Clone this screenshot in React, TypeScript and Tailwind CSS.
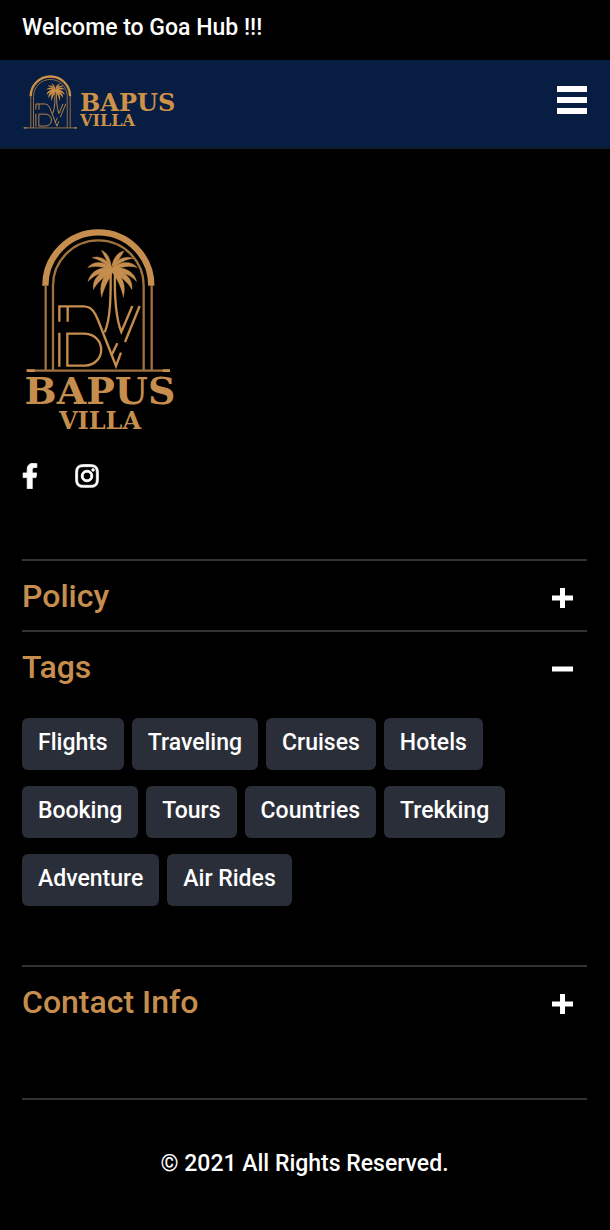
import React, { useState } from 'react';
import { FaFacebookF, FaInstagram } from 'react-icons/fa';

const tags = [
  'Flights',
  'Traveling',
  'Cruises',
  'Hotels',
  'Booking',
  'Tours',
  'Countries',
  'Trekking',
  'Adventure',
  'Air Rides',
];

const LogoMark: React.FC<{ className?: string }> = ({ className }) => (
  <svg viewBox="36 27 468 432" className={className} fill="none" stroke="currentColor" aria-hidden="true">
    {/* arch */}
    <path d="M106 197A159 160 0 0 1 424 197" strokeWidth="19" />
    <g strokeWidth="7" opacity="0.8">
      <path d="M107 197V452M425 197V452" />
      <path d="M129 452V197A136 136 0 0 1 401 197V452" />
      <path d="M50 452H480" />
    </g>
    <path d="M50 452H74M458 452H480" strokeWidth="8" />
    {/* monogram */}
    <g strokeWidth="7">
      <path d="M148 305V259H222C246 260 256 280 264 300L318 438L333 398" />
      <path d="M173 305V259M148 338V440" />
      <path d="M172 437V341H224C290 344 290 434 224 437Z" />
      <path d="M322 370L304 407M389 258L345 366" />
      <path d="M302 150C302 210 304 290 284 337M315 150C313 220 316 290 334 336L367 258" />
    </g>
    {/* palm crown */}
    <g fill="currentColor" strokeWidth="1" strokeLinejoin="round">
      <path d="M304 142C302 116 292 98 274 91C282 104 288 122 304 142Z" />
      <path d="M304 142C310 116 320 98 342 93C334 106 326 124 304 142Z" />
      <path d="M306 144C290 114 266 106 246 113C266 118 282 128 306 144Z" />
      <path d="M306 144C322 114 346 106 370 115C348 118 332 128 306 144Z" />
      <path d="M306 144C280 122 250 122 233 143C258 136 280 140 306 152Z" />
      <path d="M306 144C334 122 364 122 382 143C358 136 334 140 306 152Z" />
      <path d="M306 144C270 138 240 156 234 185C252 164 276 158 306 154Z" />
      <path d="M306 144C342 138 374 156 380 185C362 164 338 158 306 154Z" />
      <path d="M306 146C270 152 246 176 250 209C264 184 282 170 306 156Z" />
      <path d="M306 146C344 152 370 176 366 209C352 184 332 170 306 156Z" />
      <path d="M306 148C278 166 266 196 275 232C283 200 296 178 308 158Z" />
      <path d="M306 148C338 166 350 196 340 232C334 200 322 178 308 158Z" />
    </g>
  </svg>
);

interface SectionProps {
  title: string;
  defaultOpen?: boolean;
  children?: React.ReactNode;
}

const Section: React.FC<SectionProps> = ({ title, defaultOpen = false, children }) => {
  const [open, setOpen] = useState(defaultOpen);

  return (
    <section className="border-t-2 border-[#333333]">
      <h2>
        <button
          type="button"
          aria-expanded={open}
          onClick={() => setOpen(!open)}
          className="flex h-[69px] w-full items-center justify-between pr-3 text-left text-[32px] font-medium text-[#c68e4e]"
        >
          <span>{title}</span>
          <svg viewBox="0 0 24 24" className="size-6 text-white" fill="none" stroke="currentColor" strokeWidth="5" aria-hidden="true">
            <path d={open ? 'M1 14H22' : 'M1 14H22M11.5 4V24'} />
          </svg>
        </button>
      </h2>
      {open && children}
    </section>
  );
};

const App: React.FC = () => {
  return (
    <div className="min-h-screen bg-black font-[Roboto,sans-serif] text-[23px] leading-8 font-medium text-white">
      <p className="px-[22px] pt-3 pb-4">Welcome to Goa Hub !!!</p>

      <header className="flex h-[89px] items-start justify-between border-b-2 border-[#101b2e] bg-[#081d42] pt-[15px] pr-[23px] pl-[22px]">
        <a href="#home" aria-label="Bapus Villa" className="flex items-end text-[#cd9248]">
          <LogoMark className="h-[54px] w-[58px]" />
          <span className="flex flex-col font-['DejaVu_Serif',serif] font-bold">
            <span className="text-2xl leading-5">BAPUS</span>
            <span className="text-base leading-4">VILLA</span>
          </span>
        </a>
        <button type="button" aria-label="Open menu" className="mt-[11px]">
          <svg viewBox="0 0 30 28" className="h-7 w-[30px]" fill="currentColor" aria-hidden="true">
            <path d="M0 0H30V6H0ZM0 11H30V17H0ZM0 22H30V28H0Z" />
          </svg>
        </button>
      </header>

      <footer className="pt-20 pr-[23px] pl-[22px]">
        <a href="#home" aria-label="Bapus Villa" className="flex w-[156px] flex-col items-center text-[#c68e4e]">
          <LogoMark className="w-full" />
          <span className="font-['DejaVu_Serif',serif] text-[38px] leading-9 font-bold">BAPUS</span>
          <span className="font-['DejaVu_Serif',serif] text-2xl leading-6 font-bold">VILLA</span>
        </a>

        <div className="mt-[30px] mb-[70px] flex gap-9">
          <a href="#facebook" aria-label="Facebook">
            <FaFacebookF className="h-[26px] w-4" stroke="currentColor" strokeWidth="16" />
          </a>
          <a href="#instagram" aria-label="Instagram">
            <FaInstagram className="size-[26px]" stroke="currentColor" strokeWidth="16" />
          </a>
        </div>

        <Section title="Policy" />
        <Section title="Tags" defaultOpen>
          <ul className="flex flex-wrap gap-x-2 gap-y-4 pt-[17px] pb-[59px]">
            {tags.map((tag) => (
              <li key={tag}>
                <a href="#tags" className="block h-[52px] rounded-md bg-[#2a2e39] px-4 pt-[9px]">
                  {tag}
                </a>
              </li>
            ))}
          </ul>
        </Section>
        <Section title="Contact Info" />

        <p className="mt-[62px] border-t-2 border-[#333333] pt-12 pb-12 text-center">© 2021 All Rights Reserved.</p>
      </footer>
    </div>
  );
};

export default App;
